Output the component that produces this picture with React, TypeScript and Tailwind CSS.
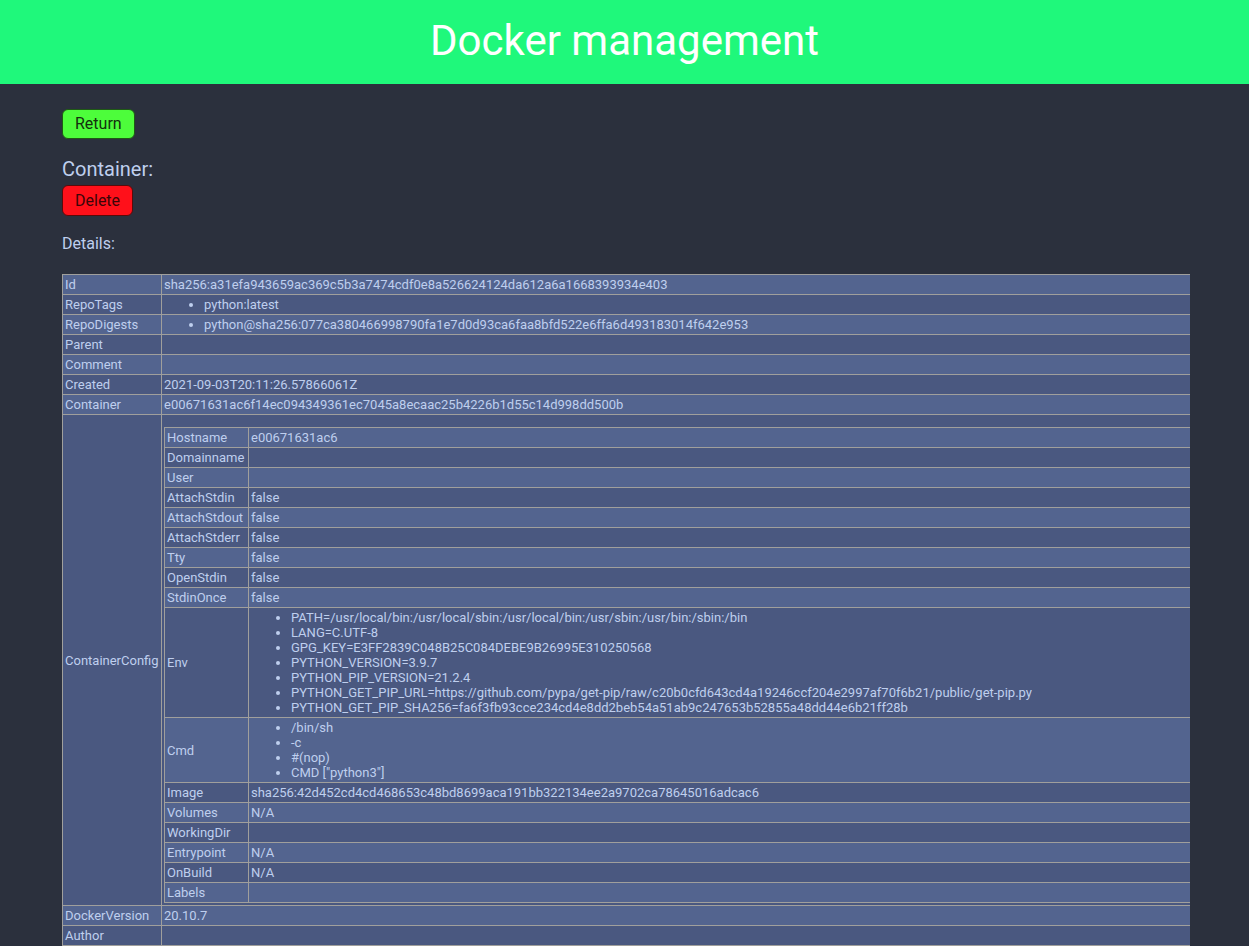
import React from "react";

type Val = string | string[] | Row[];
type Row = [string, Val];

const containerConfig: Row[] = [
    ["Hostname", "e00671631ac6"],
    ["Domainname", ""],
    ["User", ""],
    ["AttachStdin", "false"],
    ["AttachStdout", "false"],
    ["AttachStderr", "false"],
    ["Tty", "false"],
    ["OpenStdin", "false"],
    ["StdinOnce", "false"],
    [
        "Env",
        [
            "PATH=/usr/local/bin:/usr/local/sbin:/usr/local/bin:/usr/sbin:/usr/bin:/sbin:/bin",
            "LANG=C.UTF-8",
            "GPG_KEY=E3FF2839C048B25C084DEBE9B26995E310250568",
            "PYTHON_VERSION=3.9.7",
            "PYTHON_PIP_VERSION=21.2.4",
            "PYTHON_GET_PIP_URL=https://github.com/pypa/get-pip/raw/c20b0cfd643cd4a19246ccf204e2997af70f6b21/public/get-pip.py",
            "PYTHON_GET_PIP_SHA256=fa6f3fb93cce234cd4e8dd2beb54a51ab9c247653b52855a48dd44e6b21ff28b",
        ],
    ],
    ["Cmd", ["/bin/sh", "-c", "#(nop)", 'CMD ["python3"]']],
    ["Image", "sha256:42d452cd4cd468653c48bd8699aca191bb322134ee2a9702ca78645016adcac6"],
    ["Volumes", "N/A"],
    ["WorkingDir", ""],
    ["Entrypoint", "N/A"],
    ["OnBuild", "N/A"],
    ["Labels", ""],
];

const details: Row[] = [
    ["Id", "sha256:a31efa943659ac369c5b3a7474cdf0e8a526624124da612a6a1668393934e403"],
    ["RepoTags", ["python:latest"]],
    ["RepoDigests", ["python@sha256:077ca380466998790fa1e7d0d93ca6faa8bfd522e6ffa6d493183014f642e953"]],
    ["Parent", ""],
    ["Comment", ""],
    ["Created", "2021-09-03T20:11:26.57866061Z"],
    ["Container", "e00671631ac6f14ec094349361ec7045a8ecaac25b4226b1d55c14d998dd500b"],
    ["ContainerConfig", containerConfig],
    ["DockerVersion", "20.10.7"],
    ["Author", ""],
];

function Value({ value }: { value: Val }) {
    if (typeof value === "string") return <>{value}</>;
    if (value.length > 0 && Array.isArray(value[0])) {
        return <DetailTable rows={value as Row[]} nested />;
    }
    return (
        <ul className="list-disc pl-[40px] m-0">
            {(value as string[]).map((item) => (
                <li key={item}>{item}</li>
            ))}
        </ul>
    );
}

function DetailTable({ rows, nested = false }: { rows: Row[]; nested?: boolean }) {
    return (
        <table
            className={
                nested
                    ? "table-fixed border-collapse w-full mt-[10px]"
                    : "table-fixed border-collapse w-[1128px]"
            }
        >
            <colgroup>
                <col className={nested ? "w-[84px]" : "w-[99px]"} />
                <col />
            </colgroup>
            <tbody>
                {rows.map(([key, value], i) => (
                    <tr key={key} className={i % 2 === 0 ? "bg-[#53648f]" : "bg-[#4a5880]"}>
                        <td className="border border-[#a09f9c] p-[2px] align-middle whitespace-nowrap overflow-hidden">
                            {key}
                        </td>
                        <td className="border border-[#a09f9c] border-r-0 p-[2px] pr-0 align-middle whitespace-nowrap">
                            <Value value={value} />
                        </td>
                    </tr>
                ))}
            </tbody>
        </table>
    );
}

export default function App() {
    return (
        <div className="min-h-screen bg-[#2b303d] font-['Roboto',sans-serif] text-[#bfcfee]">
            <header className="h-[84px] bg-[#1ff87b] flex items-center justify-center">
                <h1 className="text-[42px] font-normal text-white leading-none pb-[2px]">Docker management</h1>
            </header>

            <main className="px-[62px] overflow-hidden">
                <button className="mt-[25px] h-[30px] px-[12px] rounded-[6px] border border-[#1f5a14] bg-[#4dfd3b] text-[16px] text-[#14300e]">
                    Return
                </button>

                <div className="mt-[18px] text-[20px] leading-[24px]">Container:</div>

                <button className="mt-[4px] h-[31px] px-[12px] rounded-[6px] border border-[#5a0a0a] bg-[#ff101a] text-[16px] text-[#3a0508] block">
                    Delete
                </button>

                <div className="mt-[18px] text-[16px] leading-[20px]">Details:</div>

                <div className="mt-[20px] text-[13px] leading-[15px] pb-[20px]">
                    <DetailTable rows={details} />
                </div>
            </main>
        </div>
    );
}
